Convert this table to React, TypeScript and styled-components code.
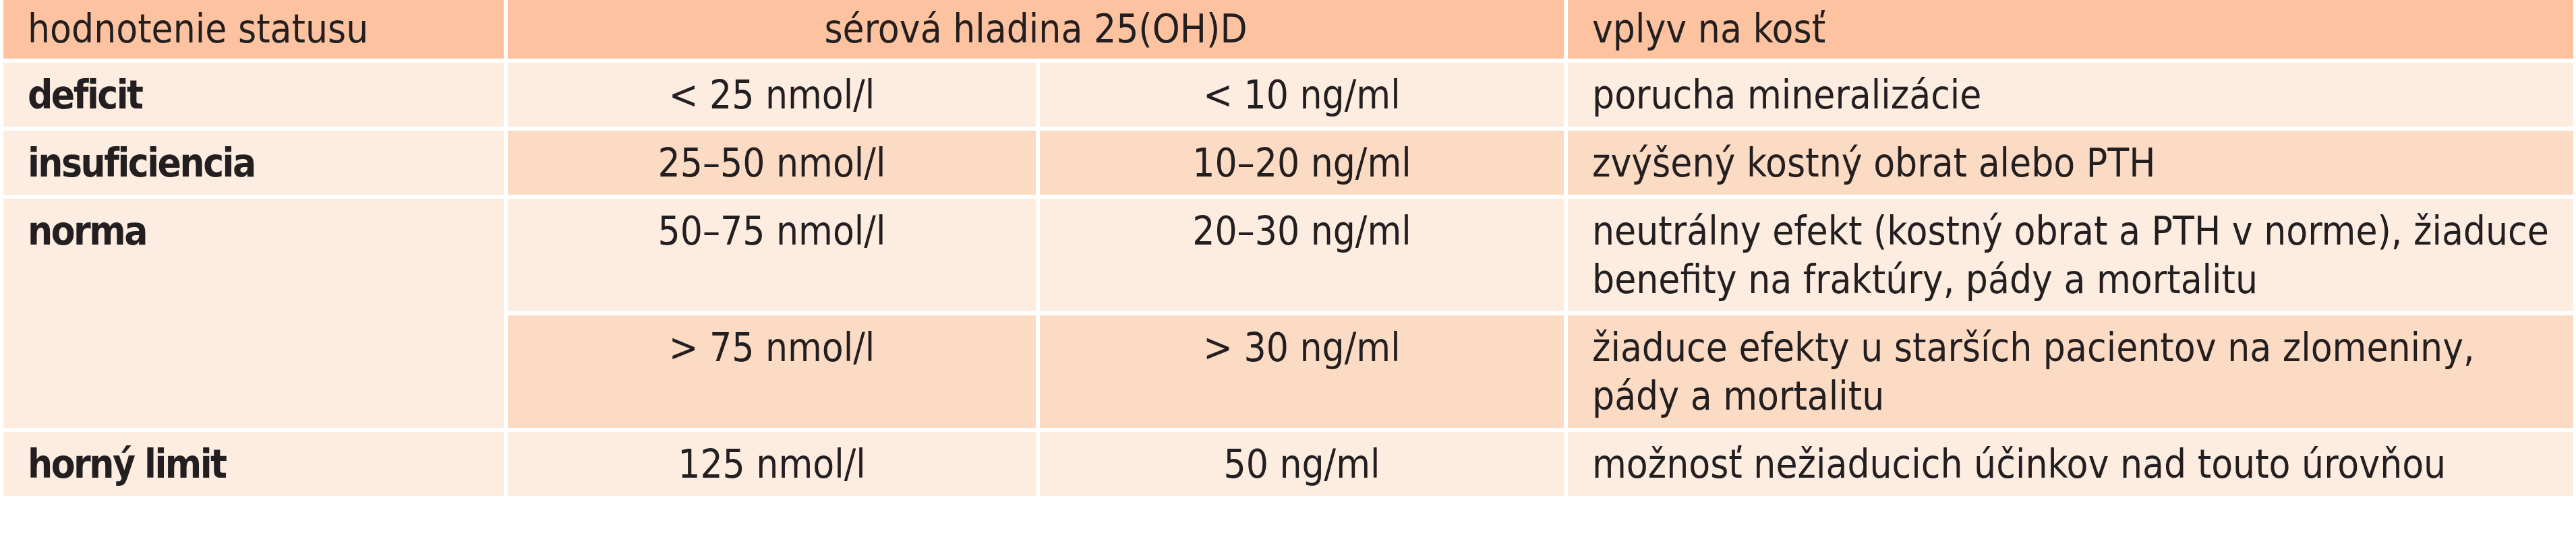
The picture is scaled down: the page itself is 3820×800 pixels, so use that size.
import { Fragment, FunctionComponent } from "react";
import styled, { createGlobalStyle } from "styled-components";

const GlobalStyle = createGlobalStyle`
  html, body {
    margin: 0;
    padding: 0;
    background: #ffffff;
  }
`;

const Page = styled.div`
  width: 3820px;
  height: 800px;
  padding: 0 5px;
  box-sizing: border-box;
  background: #ffffff;
`;

const Table = styled.div`
  display: grid;
  grid-template-columns: 742px 783px 777px 1fr;
  gap: 6px;
  font-family: "DejaVu Sans Condensed", "DejaVu Sans", sans-serif;
  font-stretch: condensed;
  font-size: 58px;
  line-height: 72px;
  color: #231f20;
`;

type Tone = "head" | "light" | "mid";

const tones: Record<Tone, string> = {
  head: "#fdc3a1",
  light: "#fdece0",
  mid: "#fcdbc5",
};

const Cell = styled.div<{
  $tone: Tone;
  $align?: "left" | "center";
  $colSpan?: number;
  $rowSpan?: number;
}>`
  background: ${(p) => tones[p.$tone]};
  text-align: ${(p) => p.$align ?? "left"};
  padding: ${(p) => (p.$tone === "head" ? "7px 36px 8px" : "12px 36px 11px")};
  grid-column: span ${(p) => p.$colSpan ?? 1};
  grid-row: span ${(p) => p.$rowSpan ?? 1};
  white-space: nowrap;
`;

const Label = styled.span`
  font-weight: 700;
  letter-spacing: -2.5px;
`;

type Row = {
  label?: string;
  labelRows?: number;
  nmol: string;
  ng: string;
  effect: string[];
  tone: Tone;
};

const rows: Row[] = [
  {
    label: "deficit",
    nmol: "< 25 nmol/l",
    ng: "< 10 ng/ml",
    effect: ["porucha mineralizácie"],
    tone: "light",
  },
  {
    label: "insuficiencia",
    nmol: "25–50 nmol/l",
    ng: "10–20 ng/ml",
    effect: ["zvýšený kostný obrat alebo PTH"],
    tone: "mid",
  },
  {
    label: "norma",
    labelRows: 2,
    nmol: "50–75 nmol/l",
    ng: "20–30 ng/ml",
    effect: [
      "neutrálny efekt (kostný obrat a PTH v norme), žiaduce",
      "benefity na fraktúry, pády a mortalitu",
    ],
    tone: "light",
  },
  {
    nmol: "> 75 nmol/l",
    ng: "> 30 ng/ml",
    effect: [
      "žiaduce efekty u starších pacientov na zlomeniny,",
      "pády a mortalitu",
    ],
    tone: "mid",
  },
  {
    label: "horný limit",
    nmol: "125 nmol/l",
    ng: "50 ng/ml",
    effect: ["možnosť nežiaducich účinkov nad touto úrovňou"],
    tone: "light",
  },
];

const App: FunctionComponent = () => (
  <>
    <GlobalStyle />
    <Page>
      <Table>
        <Cell $tone="head">hodnotenie statusu</Cell>
        <Cell $tone="head" $align="center" $colSpan={2}>
          sérová hladina 25(OH)D
        </Cell>
        <Cell $tone="head">vplyv na kosť</Cell>

        {rows.map((row) => (
          <Fragment key={row.nmol}>
            {row.label && (
              <Cell $tone="light" $rowSpan={row.labelRows}>
                <Label>{row.label}</Label>
              </Cell>
            )}
            <Cell $tone={row.tone} $align="center">
              {row.nmol}
            </Cell>
            <Cell $tone={row.tone} $align="center">
              {row.ng}
            </Cell>
            <Cell $tone={row.tone}>
              {row.effect.map((line, i) => (
                <div key={i}>{line}</div>
              ))}
            </Cell>
          </Fragment>
        ))}
      </Table>
    </Page>
  </>
);

export default App;
